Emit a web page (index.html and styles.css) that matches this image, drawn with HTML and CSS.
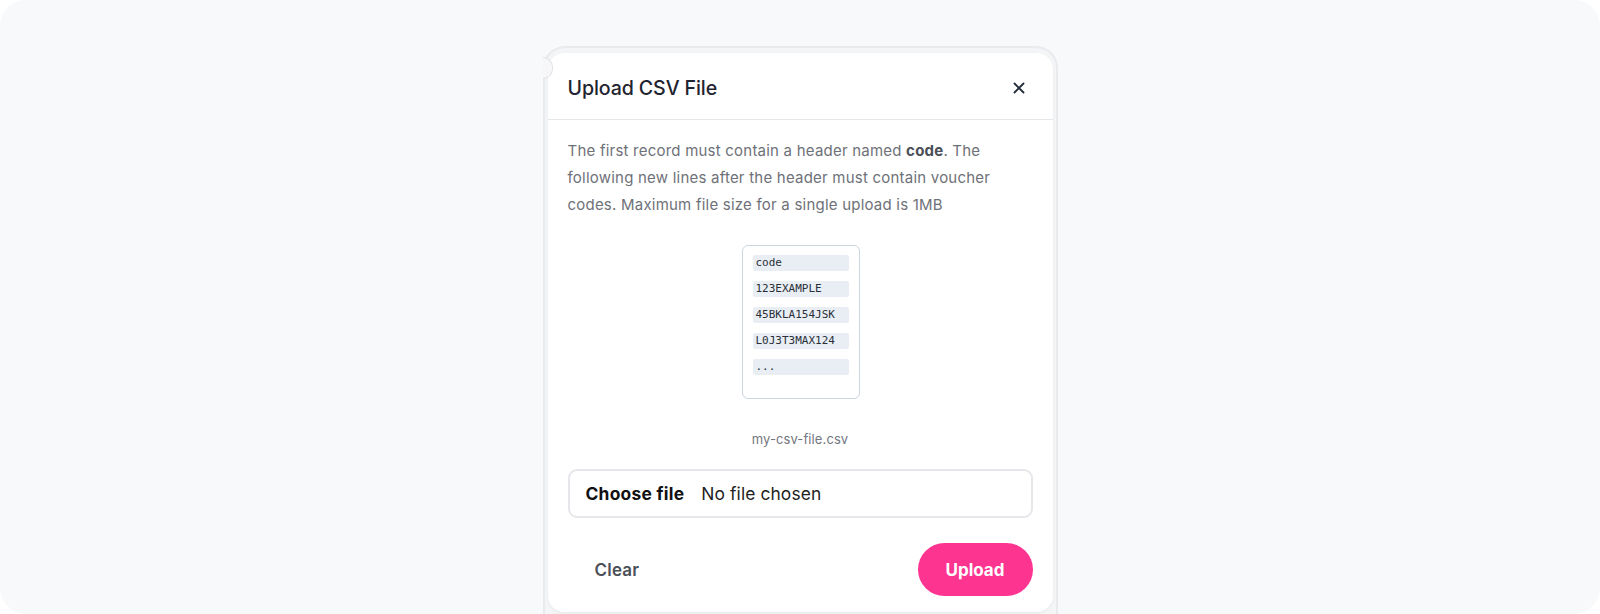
FILE: index.html
```html
<!DOCTYPE html>
<html lang="en">
<head>
<meta charset="utf-8">
<title>Upload CSV File</title>
<link rel="stylesheet" href="styles.css">
</head>
<body>
<div class="stage">
  <div class="dialog-wrap">
    <span class="notch"></span>
    <div class="card">
      <div class="card-header">
        <h2 class="title">Upload CSV File</h2>
        <button class="close" aria-label="Close">
          <svg width="14" height="14" viewBox="0 0 14 14"><path d="M2.5 2.5 L11.5 11.5 M11.5 2.5 L2.5 11.5" stroke="#1f2937" stroke-width="1.8" stroke-linecap="round"/></svg>
        </button>
      </div>
      <div class="card-body">
        <p class="desc">The first record must contain a header named <b>code</b>. The following new lines after the header must contain voucher codes. Maximum file size for a single upload is 1MB</p>
        <div class="sample">
          <div class="sample-file">
            <div class="row">code</div>
            <div class="row">123EXAMPLE</div>
            <div class="row">45BKLA154JSK</div>
            <div class="row">L0J3T3MAX124</div>
            <div class="row">...</div>
          </div>
          <div class="filename">my-csv-file.csv</div>
        </div>
        <div class="file-input">
          <span class="choose">Choose file</span>
          <span class="nofile">No file chosen</span>
        </div>
        <div class="actions">
          <button class="btn-clear">Clear</button>
          <button class="btn-upload">Upload</button>
        </div>
      </div>
    </div>
  </div>
</div>
</body>
</html>
```

FILE: styles.css
```css
* { box-sizing: border-box; }
html, body { margin: 0; padding: 0; background: #ffffff; }
body { font-family: Inter, "Noto Sans", "Liberation Sans", sans-serif; }

.stage {
  width: 1600px;
  height: 614px;
  background: #f8f9fb;
  border-radius: 26px;
  overflow: hidden;
  display: flex;
  justify-content: center;
  align-items: flex-start;
  padding-top: 46px;
}

.dialog-wrap {
  position: relative;
  width: 515px;
  height: 620px;
  border: 2px solid #e9eaee;
  border-bottom: none;
  border-radius: 22px 22px 0 0;
  background: #f4f5f7;
  padding: 5px 3px 0 3px;
}

.notch {
  position: absolute;
  left: -2px;
  top: 9px;
  width: 10px;
  height: 22px;
  border: 1.5px solid #e2e3e7;
  border-left: none;
  border-radius: 0 11px 11px 0;
  background: #f7f7f9;
  z-index: 2;
}

.card {
  width: 505px;
  height: 559px;
  background: #ffffff;
  border-radius: 16px;
  box-shadow: 0 1px 3px rgba(17, 24, 39, 0.06);
  display: flex;
  flex-direction: column;
}

.card-header {
  display: flex;
  justify-content: space-between;
  align-items: center;
  padding: 23px 20px 19px 20px;
  border-bottom: 1px solid #e5e7eb;
}

.title {
  margin: 0;
  font-size: 19.6px;
  line-height: 24px;
  font-weight: 500;
  color: #1f2430;
  letter-spacing: -0.1px;
}

.close {
  border: none;
  background: transparent;
  padding: 0;
  width: 20px;
  height: 20px;
  display: flex;
  align-items: center;
  justify-content: center;
  margin-right: 4px;
  cursor: pointer;
}

.card-body {
  padding: 17px 20px 16px 20px;
  display: flex;
  flex-direction: column;
}

.desc {
  margin: 0;
  max-width: 445px;
  font-size: 15px;
  line-height: 27px;
  letter-spacing: 0.22px;
  color: #6e7178;
}
.desc b { color: #4b5058; font-weight: 700; }

.sample {
  margin-top: 27px;
  display: flex;
  flex-direction: column;
  align-items: center;
}

.sample-file {
  width: 118px;
  border: 1px solid #cdd5df;
  border-radius: 6px;
  padding: 9px 10px 23px 10px;
  display: flex;
  flex-direction: column;
  gap: 10px;
  margin-left: 1px;
}

.row {
  height: 16px;
  background: #e9eef5;
  border-radius: 2px;
  font-family: "DejaVu Sans Mono", "Liberation Mono", monospace;
  font-size: 11px;
  line-height: 16px;
  color: #2a2f38;
  padding-left: 3px;
}

.filename {
  margin-top: 30px;
  font-size: 13px;
  line-height: 20px;
  letter-spacing: 0.1px;
  color: #737780;
}

.file-input {
  margin-top: 20px;
  height: 49px;
  border: 2px solid #e6e7ea;
  border-radius: 9px;
  display: flex;
  align-items: center;
  padding-left: 16px;
  font-size: 17.4px;
}
.choose { font-weight: 700; color: #111111; margin-right: 17px; letter-spacing: 0.25px; }
.nofile { color: #1f1f1f; letter-spacing: 0.1px; }

.actions {
  margin-top: 25px;
  display: flex;
  justify-content: space-between;
  align-items: center;
}

.btn-clear {
  border: none;
  background: transparent;
  font-family: inherit;
  font-size: 17px;
  font-weight: 600;
  letter-spacing: 0.2px;
  color: #4b4f57;
  padding: 0 0 0 27px;
  cursor: pointer;
}

.btn-upload {
  border: none;
  background: #fe3491;
  color: #ffffff;
  font-family: inherit;
  font-size: 17px;
  font-weight: 700;
  height: 53px;
  width: 115px;
  border-radius: 27px;
  cursor: pointer;
}
```
